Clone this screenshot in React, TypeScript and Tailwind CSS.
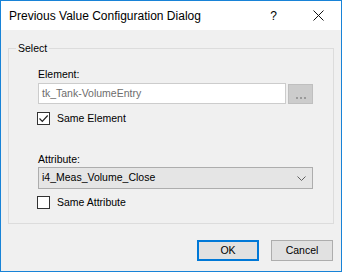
import React from 'react';

const font = { fontFamily: '"Liberation Sans", Arial, sans-serif' };

const CheckBox: React.FC<{ checked?: boolean; label: string }> = ({ checked = false, label }) => (
  <div className="flex items-center h-[14px]">
    <div className="w-[13px] h-[13px] border border-[#333333] bg-white flex items-center justify-center">
      {checked && (
        <svg width="11" height="11" viewBox="0 0 11 11">
          <path d="M1.5 5.5 L4.3 8.3 L9.7 2.5" fill="none" stroke="#222" strokeWidth="1.2" />
        </svg>
      )}
    </div>
    <span className="ml-[7px] text-[10.5px] text-black leading-[14px]">{label}</span>
  </div>
);

export default function App() {
  return (
    <div className="w-[342px] h-[272px] border border-[#1883d7] flex flex-col bg-[#f0f0f0]" style={font}>
      {/* Title bar */}
      <div className="h-[29px] bg-white flex items-center shrink-0">
        <span className="ml-[8px] text-[12px] text-black">Previous Value Configuration Dialog</span>
        <span className="ml-auto text-[12px] text-black mr-[36px]">?</span>
        <svg width="11" height="11" viewBox="0 0 11 11" className="mr-[17px]">
          <path d="M0.5 0.5 L10.5 10.5 M10.5 0.5 L0.5 10.5" stroke="#111" strokeWidth="1" />
        </svg>
      </div>

      {/* Body */}
      <div className="flex-1 flex flex-col">
        <div className="relative mt-[18px] ml-[7px] w-[326px] h-[176px] border border-[#dcdcdc]">
          <span className="absolute left-[7px] -top-[8px] px-[2px] bg-[#f0f0f0] text-[10.5px] leading-[14px] text-black">
            Select
          </span>
          <div className="pl-[29px] pt-[18px] flex flex-col">
            <span className="text-[10.5px] leading-[14px] text-black">Element:</span>
            <div className="mt-[2px] flex items-start">
              <div className="w-[248px] h-[21px] border border-[#cccccc] bg-white flex items-center pl-[3px] text-[10.5px] text-[#6d6d6d]">
                tk_Tank-VolumeEntry
              </div>
              <div className="ml-[2px] mt-[1px] w-[25px] h-[20px] border border-[#bfbfbf] bg-[#cccccc] flex items-end justify-center pb-[4px] gap-[2px]">
                <span className="w-[2px] h-[2px] bg-[#9a9a9a]" />
                <span className="w-[2px] h-[2px] bg-[#9a9a9a]" />
                <span className="w-[2px] h-[2px] bg-[#9a9a9a]" />
              </div>
            </div>
            <div className="mt-[7px] -ml-[1px]">
              <CheckBox checked label="Same Element" />
            </div>
            <span className="mt-[27px] text-[10.5px] leading-[14px] text-black">Attribute:</span>
            <div className="mt-[1px] w-[275px] h-[22px] border border-[#adadad] bg-[#e5e5e5] flex items-center pl-[3px] pr-[6px] text-[10.5px] text-black">
              <span>i4_Meas_Volume_Close</span>
              <svg width="9" height="5" viewBox="0 0 9 5" className="ml-auto">
                <path d="M0.5 0.5 L4.5 4.5 L8.5 0.5" fill="none" stroke="#606060" strokeWidth="1" />
              </svg>
            </div>
            <div className="mt-[6px] -ml-[1px]">
              <CheckBox label="Same Attribute" />
            </div>
          </div>
        </div>

        <div className="mt-[16px] flex justify-end pr-[8px] gap-[12px]">
          <button className="w-[62px] h-[21px] border-2 border-[#0078d7] bg-[#e1e1e1] text-[10.5px] text-black leading-none">
            OK
          </button>
          <button className="w-[62px] h-[21px] border border-[#adadad] bg-[#e1e1e1] text-[10.5px] text-black leading-none">
            Cancel
          </button>
        </div>
      </div>
    </div>
  );
}
